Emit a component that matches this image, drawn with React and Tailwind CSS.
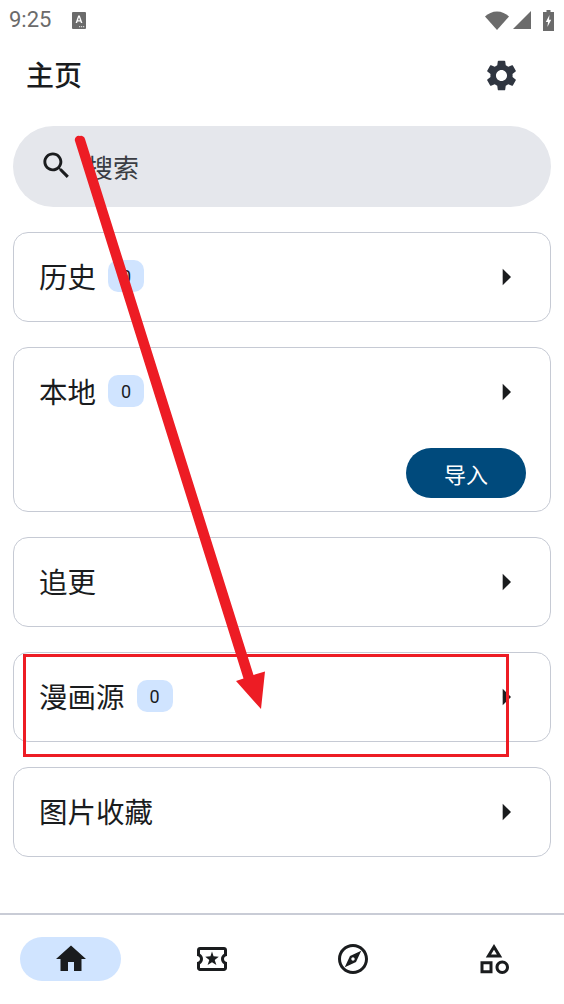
import React from 'react';

const paths = {
    search: 'M15.5 14h-.79l-.28-.27C15.41 12.59 16 11.11 16 9.5 16 5.91 13.09 3 9.5 3S3 5.91 3 9.5 5.91 16 9.5 16c1.61 0 3.09-.59 4.23-1.57l.27.28v.79l5 4.99L20.49 19l-4.99-5zm-6 0C7.01 14 5 11.99 5 9.5S7.01 5 9.5 5 14 7.01 14 9.5 11.99 14 9.5 14z',
    settings: 'M19.14 12.94c.04-.3.06-.61.06-.94 0-.32-.02-.64-.07-.94l2.03-1.58c.18-.14.23-.41.12-.61l-1.92-3.32c-.12-.22-.37-.29-.59-.22l-2.39.96c-.5-.38-1.03-.7-1.62-.94l-.36-2.54c-.04-.24-.24-.41-.48-.41h-3.84c-.24 0-.43.17-.47.41l-.36 2.54c-.59.24-1.13.57-1.62.94l-2.39-.96c-.22-.08-.47 0-.59.22L2.74 8.87c-.12.21-.08.47.12.61l2.03 1.58c-.05.3-.09.63-.09.94s.02.64.07.94l-2.03 1.58c-.18.14-.23.41-.12.61l1.92 3.32c.12.22.37.29.59.22l2.39-.96c.5.38 1.03.7 1.62.94l.36 2.54c.05.24.24.41.48.41h3.84c.24 0 .44-.17.47-.41l.36-2.54c.59-.24 1.13-.56 1.62-.94l2.39.96c.22.08.47 0 .59-.22l1.92-3.32c.12-.22.07-.47-.12-.61l-2.01-1.58zM12 15.6c-1.98 0-3.6-1.62-3.6-3.6s1.62-3.6 3.6-3.6 3.6 1.62 3.6 3.6-1.62 3.6-3.6 3.6z',
    arrowRight: 'M10 17l5-5-5-5z',
    home: 'M10 20v-6h4v6h5v-8h3L12 3 2 12h3v8z',
    ticket: 'M22 10V6c0-1.11-.9-2-2-2H4c-1.1 0-1.99.89-1.99 2v4c1.1 0 1.99.9 1.99 2s-.89 2-2 2v4c0 1.1.9 2 2 2h16c1.1 0 2-.9 2-2v-4c-1.1 0-2-.9-2-2s.9-2 2-2zm-2-1.46c-1.19.69-2 1.99-2 3.46s.81 2.77 2 3.46V18H4v-2.54c1.19-.69 2-1.99 2-3.46 0-1.48-.8-2.77-1.99-3.46L4 6h16v2.54zM9.07 16L12 14.12 14.93 16l-1.12-3.36 2.69-2.2-3.47-.21L12 7l-1.03 3.22-3.47.21 2.69 2.2z',
    explore: 'M12 2C6.48 2 2 6.48 2 12s4.48 10 10 10 10-4.48 10-10S17.52 2 12 2zm0 18c-4.41 0-8-3.59-8-8s3.59-8 8-8 8 3.59 8 8-3.59 8-8 8zm-5.5-2.5l7.51-3.49L17.5 6.5 9.99 9.99 6.5 17.5zm5.5-6.6c.61 0 1.1.49 1.1 1.1s-.49 1.1-1.1 1.1-1.1-.49-1.1-1.1.49-1.1 1.1-1.1z',
    category: 'M12 2l-5.5 9h11L12 2zm0 3.84L13.93 9h-3.87L12 5.84zM17.5 13c-2.49 0-4.5 2.01-4.5 4.5s2.01 4.5 4.5 4.5 4.5-2.01 4.5-4.5-2.01-4.5-4.5-4.5zm0 7c-1.38 0-2.5-1.12-2.5-2.5s1.12-2.5 2.5-2.5 2.5 1.12 2.5 2.5-1.12 2.5-2.5 2.5zM3 21.5h8v-8H3v8zm2-6h4v4H5v-4z',
};

const Icon = ({ name, className }) => (
    <svg viewBox="0 0 24 24" fill="currentColor" className={className}>
        <path d={paths[name]} />
    </svg>
);

const StatusBar = () => (
    <div className="flex h-[38px] items-center justify-between pl-[9px] pr-[10px] pt-[2px] text-[#6b6b6b]">
        <div className="flex items-center gap-[21px]">
            <span className="font-['Roboto',sans-serif] text-[22px] leading-none">9:25</span>
            <svg viewBox="0 0 14 17" className="h-[17px] w-[14px]">
                <rect width="14" height="17" rx="1" fill="#6b6b6b" />
                <path d="M3.6 11 6.2 3.5h1.6l2.6 7.500H8.900l-.5-1.500H5.600l-.5 1.500zM6 8.300h2L7 5.200z" fill="#fff" />
                <path d="M7 14h1.200v1.200H7zm2 0h1.200v1.200H9zm2 0h1.200v1.200H11z" fill="#fff" opacity="0.7" />
            </svg>
        </div>
        <div className="flex items-center">
            <svg viewBox="0 0 24 19" className="h-[19px] w-[24px]">
                <path d="M0 5.500C3 2.500 7.500 0.500 12 0.500s9 2 12 5L12 19z" fill="#6b6b6b" />
            </svg>
            <svg viewBox="0 0 18 18" className="ml-[4px] mr-[12px] h-[18px] w-[18px]">
                <path d="M0 18 18 0v18z" fill="#6b6b6b" />
            </svg>
            <svg viewBox="0 0 11 21" className="h-[21px] w-[11px]">
                <path d="M3.500 0h4v2H11v19H0V2h3.500z" fill="#6b6b6b" />
                <path d="M6.500 5 2.800 12h2.200l-.6 5 3.800-7.300H6z" fill="#fff" />
            </svg>
        </div>
    </div>
);

const Badge = ({ children }) => (
    <span className="flex h-[32px] w-[36px] items-center justify-center rounded-[10px] bg-[#d0e4ff] font-['Roboto',sans-serif] text-[18px] text-[#1a1c1e]">
        {children}
    </span>
);

const Card = ({ title, count, children }) => (
    <div className="rounded-[15px] border border-[#c6cad4] bg-white pl-[26px] pr-[24px]">
        <div className="-ml-px flex h-[88px] -translate-y-px items-center gap-[12px]">
            <span className="text-[28.5px] leading-none text-[#1a1c1e]">{title}</span>
            {count !== undefined ? <Badge>{count}</Badge> : null}
            <Icon name="arrowRight" className="ml-auto h-[40px] w-[40px] translate-y-px text-[#1a1c1e]" />
        </div>
        {children}
    </div>
);

const NavItem = ({ name, active }) => (
    <div className="flex flex-1 justify-center">
        <div className={`flex h-[44px] w-[101px] items-center justify-center rounded-full ${active ? 'bg-[#d0e4ff]' : ''}`}>
            <Icon name={name} className="h-[36px] w-[36px] text-[#1a1c1e]" />
        </div>
    </div>
);

// red marks drawn over the screenshot
const Annotation = () => (
    <svg viewBox="0 0 564 1004" className="pointer-events-none absolute inset-0 h-[1004px] w-[564px]">
        <rect x="24.5" y="655.500" width="483" height="100" fill="none" stroke="#ed1c24" strokeWidth="3" />
        <path d="M80 136a4 4 0 0 1 5 3L253.500 675 265 671.500 261 709 236 681 243.500 678.500 75 141a4 4 0 0 1 5-5z" fill="#ed1c24" />
    </svg>
);

const App = () => {
    return (
        <div className="relative flex h-[1004px] w-[564px] flex-col overflow-hidden bg-white font-['Noto_Sans_CJK_SC','Noto_Sans',sans-serif]">
            <StatusBar />

            <div className="flex h-[76px] items-center justify-between pl-[26px] pr-[44px]">
                <span className="-translate-y-[2px] text-[28px] font-medium leading-none text-[#1a1c1e]">主页</span>
                <Icon name="settings" className="h-[37px] w-[37px] -translate-y-px text-[#2f3540]" />
            </div>

            <div className="mx-[13px] mt-[12px] flex h-[81px] items-center rounded-full bg-[#e5e7ec] pl-[26px]">
                <Icon name="search" className="h-[35px] w-[35px] -translate-y-px text-[#1a1c1e]" />
                <span className="ml-[13px] text-[26px] leading-none text-[#3a3d43]">搜索</span>
            </div>

            <div className="mt-[25px] flex flex-col gap-[25px] px-[13px]">
                <Card title="历史" count={0} />
                <Card title="本地" count={0}>
                    <div className="mt-[12px] flex justify-end pb-[13px]">
                        <button className="h-[50px] w-[120px] rounded-full bg-[#004a7c] text-[22px] leading-none text-white">
                            导入
                        </button>
                    </div>
                </Card>
                <Card title="追更" />
                <Card title="漫画源" count={0} />
                <Card title="图片收藏" />
            </div>

            <div className="mt-auto flex h-[91px] border-t-2 border-[#c9ccd6] pt-[22px]">
                <NavItem name="home" active />
                <NavItem name="ticket" />
                <NavItem name="explore" />
                <NavItem name="category" />
            </div>

            <Annotation />
        </div>
    );
};

export default App;
